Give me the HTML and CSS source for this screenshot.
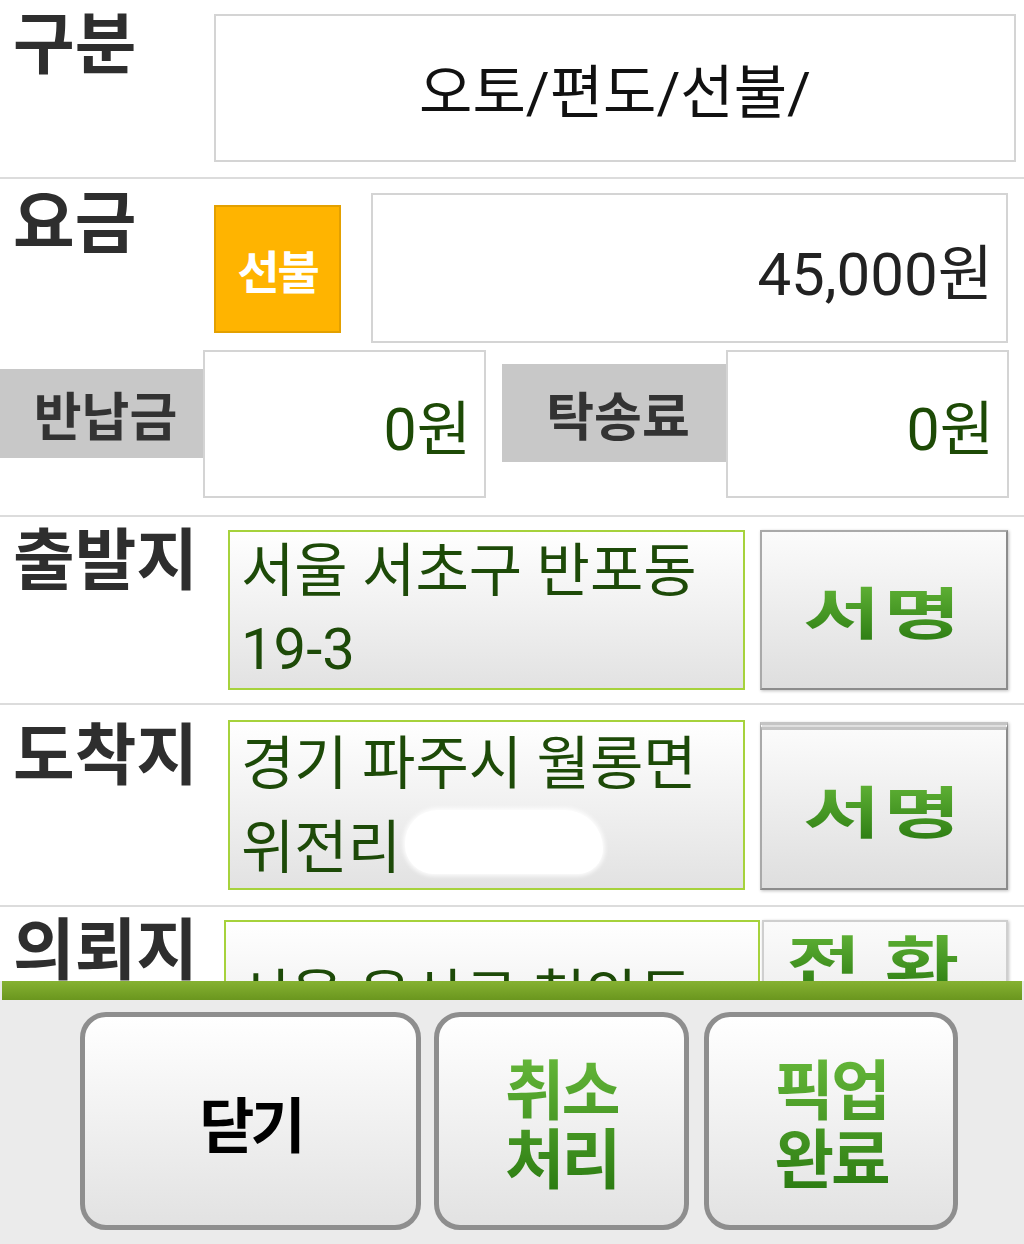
FILE: index.html
```html
<!DOCTYPE html>
<html lang="ko">
<head>
<meta charset="utf-8">
<title>탁송 상세</title>
<link rel="stylesheet" href="styles.css">
</head>
<body>
<div class="screen">
  <div class="content">
    <section class="row row-type">
      <div class="label">구분</div>
      <div class="box box-type">오토/편도/선불/</div>
    </section>

    <section class="row row-fare">
      <div class="fare-top">
        <div class="label">요금</div>
        <div class="badge">선불</div>
        <div class="box box-fare">45,000원</div>
      </div>
      <div class="fare-sub">
        <div class="tag tag-return">반납금</div>
        <div class="box box-small">0원</div>
        <div class="tag tag-delivery">탁송료</div>
        <div class="box box-small">0원</div>
      </div>
    </section>

    <section class="row row-addr">
      <div class="label">출발지</div>
      <div class="field">서울 서초구 반포동 19-3</div>
      <button class="sign"><span class="gtext wide">서명</span></button>
    </section>

    <section class="row row-addr row-dest">
      <div class="label label-dest">도착지</div>
      <div class="field field-dest">경기 파주시 월롱면 위전리<span class="blob"></span></div>
      <button class="sign sign-double"><span class="gtext wide">서명</span></button>
    </section>

    <section class="row row-addr row-req">
      <div class="label">의뢰지</div>
      <div class="field field-req">서울 용산구 청암동</div>
      <button class="sign sign-call"><span class="gtext wider">전화</span></button>
    </section>
  </div>

  <div class="bottom">
    <div class="stripe"></div>
    <div class="actions">
      <button class="act act-close">닫기</button>
      <button class="act act-cancel"><span class="gtext stack">취소<br>처리</span></button>
      <button class="act act-pick"><span class="gtext stack">픽업<br>완료</span></button>
    </div>
  </div>
</div>
</body>
</html>
```

FILE: styles.css
```css
* {
  box-sizing: border-box;
  margin: 0;
  padding: 0;
}

html, body {
  width: 1024px;
  height: 1244px;
  overflow: hidden;
}

body {
  background: #ffffff;
  font-family: Roboto, "Noto Sans CJK KR", sans-serif;
}

button {
  font: inherit;
  cursor: pointer;
}

.screen {
  display: flex;
  flex-direction: column;
  height: 1244px;
}

.content {
  flex: none;
  height: 981px;
  overflow: hidden;
}

.row {
  display: flex;
  align-items: flex-start;
  border-bottom: 2px solid #dcdcdc;
}

.label {
  flex: none;
  width: 214px;
  padding-left: 13px;
  margin-top: -15px;
  font-family: "Noto Sans CJK KR", sans-serif;
  font-weight: 700;
  font-size: 67px;
  line-height: 1.2;
  letter-spacing: 0;
  color: #2e2e2e;
}

.label-dest {
  margin-top: -10px;
}

.box {
  border: 2px solid #d4d4d4;
  background: #ffffff;
  display: flex;
  align-items: center;
}

/* 구분 */
.row-type {
  padding: 14px 8px 15px 0;
}

.box-type {
  flex: 1;
  height: 148px;
  justify-content: center;
  font-size: 58px;
  color: #111111;
}

/* 요금 */
.row-fare {
  flex-direction: column;
  align-items: stretch;
  gap: 7px;
  padding: 14px 0 17px 0;
}

.fare-top {
  display: flex;
  align-items: flex-start;
}

.badge {
  flex: none;
  width: 127px;
  height: 128px;
  margin-top: 12px;
  background: #ffb400;
  border: 2px solid #e3a000;
  display: flex;
  align-items: center;
  justify-content: center;
  font-family: "Noto Sans CJK KR", sans-serif;
  font-weight: 700;
  font-size: 46px;
  letter-spacing: -2px;
  color: #ffffff;
}

.box-fare {
  margin-left: 30px;
  width: 637px;
  height: 150px;
  justify-content: flex-end;
  padding-right: 13px;
  font-size: 60px;
  color: #222222;
}

.fare-sub {
  display: flex;
  align-items: flex-start;
}

.tag {
  flex: none;
  background: #c8c8c8;
  display: flex;
  align-items: center;
  justify-content: center;
  padding-left: 8px;
  font-family: "Noto Sans CJK KR", sans-serif;
  font-weight: 700;
  font-size: 52px;
  letter-spacing: 0;
  color: #333333;
}

.tag-return {
  width: 203px;
  height: 89px;
  margin-top: 19px;
}

.tag-delivery {
  width: 224px;
  height: 98px;
  margin-top: 14px;
  margin-left: 16px;
}

.box-small {
  width: 283px;
  height: 148px;
  justify-content: flex-end;
  padding-right: 13px;
  font-size: 59px;
  color: #1d4a06;
}

/* 주소 행 */
.row-addr {
  padding: 13px 16px 13px 0;
}

.row-dest {
  padding: 15px 16px 15px 0;
}

.row-req {
  padding: 13px 16px 0 0;
}

.field {
  flex: none;
  width: 517px;
  height: 160px;
  margin-left: 14px;
  border: 2px solid #a6d23c;
  background: linear-gradient(#ffffff, #e2e2e2);
  padding: 0 8px 0 11px;
  overflow: hidden;
  font-size: 58px;
  line-height: 78px;
  color: #1d4a08;
}

.field-dest {
  height: 170px;
  padding-top: 0;
  line-height: 84px;
}

.field-req {
  width: 536px;
  height: 180px;
  margin-left: 10px;
  padding-top: 36px;
}

.blob {
  display: inline-block;
  width: 198px;
  height: 64px;
  margin-left: 4px;
  vertical-align: -6px;
  background: #ffffff;
  border-radius: 34px 40px 26px 30px;
  box-shadow: 0 0 4px 2px rgba(255, 255, 255, 0.9);
}

.sign {
  flex: none;
  width: 248px;
  height: 160px;
  margin-left: 15px;
  border: 2px solid #a9a9a9;
  border-right-color: #8c8c8c;
  border-bottom-color: #8c8c8c;
  background: linear-gradient(#fbfbfb, #dedede);
  box-shadow: 1px 1px 3px rgba(0, 0, 0, 0.25);
  display: flex;
  align-items: center;
  justify-content: center;
}

.sign-double {
  height: 168px;
  margin-top: 2px;
  border-top: 8px double #c4c4c4;
}

.sign-call {
  width: 246px;
  height: 180px;
  margin-left: 2px;
  align-items: flex-start;
  padding-top: 2px;
  border-color: #cfcfcf;
}

.gtext {
  display: inline-block;
  font-family: "Noto Sans CJK KR", sans-serif;
  font-weight: 700;
  color: #3a9018;
  background: linear-gradient(#66b83a, #2c7c12);
  -webkit-background-clip: text;
  background-clip: text;
  -webkit-text-fill-color: transparent;
}

.wide {
  font-size: 56px;
  line-height: 1.2;
  letter-spacing: 2px;
  transform: scaleX(1.5);
}

.wider {
  font-size: 56px;
  line-height: 1.2;
  letter-spacing: 16px;
  transform: scaleX(1.45);
}

/* 하단 */
.bottom {
  flex: 1;
  background: #ebebeb;
  display: flex;
  flex-direction: column;
}

.stripe {
  height: 19px;
  margin: 0 2px;
  background: linear-gradient(#86b232, #6a961e);
}

.actions {
  display: flex;
  gap: 13px;
  padding: 12px 0 0 80px;
}

.act {
  flex: none;
  height: 218px;
  border: 5px solid #8e8e8e;
  border-radius: 26px;
  background: linear-gradient(#ffffff, #e2e2e2);
  display: flex;
  align-items: center;
  justify-content: center;
  font-family: "Noto Sans CJK KR", sans-serif;
  font-weight: 700;
}

.act-close {
  width: 341px;
  font-size: 60px;
  letter-spacing: -4px;
  color: #000000;
}

.act-cancel {
  width: 255px;
}

.act-pick {
  width: 254px;
  margin-left: 2px;
}

.stack {
  font-size: 65px;
  line-height: 69px;
  letter-spacing: -3px;
  text-align: center;
}
```
